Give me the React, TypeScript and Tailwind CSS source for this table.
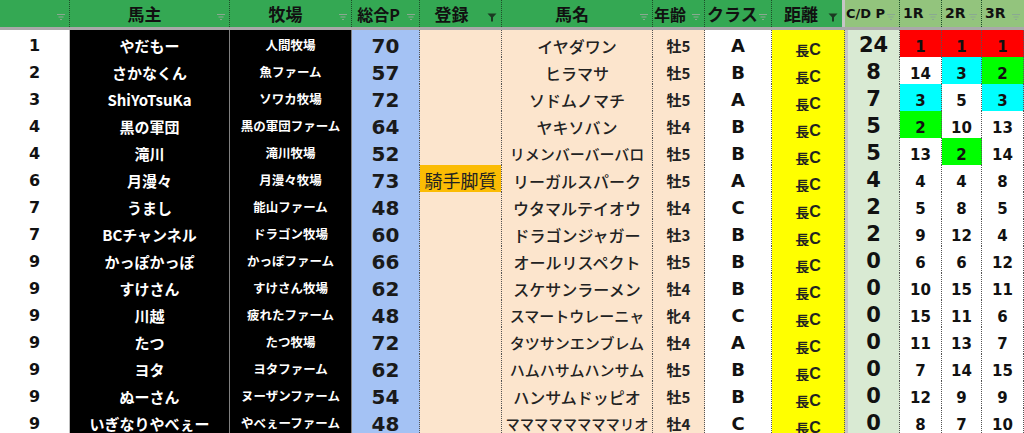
import React from "react";

type Row = [number, string, string, number, string, string, string, string, number, number, number, number];

const rows: Row[] = [
  [1, "やだもー", "人間牧場", 70, "", "イヤダワン", "牡5", "A", 24, 1, 1, 1],
  [2, "さかなくん", "魚ファーム", 57, "", "ヒラマサ", "牡5", "B", 8, 14, 3, 2],
  [3, "ShiYoTsuKa", "ソワカ牧場", 72, "", "ソドムノマチ", "牡5", "A", 7, 3, 5, 3],
  [4, "黒の軍団", "黒の軍団ファーム", 64, "", "ヤキソバン", "牡4", "B", 5, 2, 10, 13],
  [4, "滝川", "滝川牧場", 52, "", "リメンバーバーバロ", "牡5", "B", 5, 13, 2, 14],
  [6, "月漫々", "月漫々牧場", 73, "騎手脚質", "リーガルスパーク", "牡5", "A", 4, 4, 4, 8],
  [7, "うまし", "能山ファーム", 48, "", "ウタマルテイオウ", "牡4", "C", 2, 5, 8, 5],
  [7, "BCチャンネル", "ドラゴン牧場", 60, "", "ドラゴンジャガー", "牡3", "B", 2, 9, 12, 4],
  [9, "かっぽかっぽ", "かっぽファーム", 66, "", "オールリスペクト", "牡5", "B", 0, 6, 6, 12],
  [9, "すけさん", "すけさん牧場", 62, "", "スケサンラーメン", "牡4", "B", 0, 10, 15, 11],
  [9, "川越", "疲れたファーム", 48, "", "スマートウレーニャ", "牝4", "C", 0, 15, 11, 6],
  [9, "たつ", "たつ牧場", 72, "", "タツサンエンブレム", "牡4", "A", 0, 11, 13, 7],
  [9, "ヨタ", "ヨタファーム", 62, "", "ハムハサムハンサム", "牡5", "B", 0, 7, 14, 15],
  [9, "ぬーさん", "ヌーザンファーム", 54, "", "ハンサムドッピオ", "牡5", "B", 0, 12, 9, 9],
  [9, "いぎなりやべぇー", "やべぇーファーム", 48, "", "ママママママママリオ", "牡4", "C", 0, 8, 7, 10],
];

const GRID =
  "grid grid-cols-[70px_160px_122px_68px_82px_151px_52px_67px_73px_55px_42px_40px_42px]";

const JP = "font-['Noto_Sans_CJK_JP',sans-serif]";
const NUM = "font-['DejaVu_Sans','Noto_Sans_CJK_JP',sans-serif]";

function FilterIcon({ active }: { active?: boolean }) {
  if (active) {
    return (
      <svg width="10" height="9" viewBox="0 0 10 9" className="absolute right-[4px] bottom-[5px]">
        <path d="M0.5 0.5h9L6 4.2v4.3H4V4.2z" fill="#1b3a22" />
      </svg>
    );
  }
  return (
    <svg width="10" height="8" viewBox="0 0 10 8" className="absolute right-[3px] bottom-[6px]">
      <path d="M1 1.5h8M2.5 4h5M4 6.5h2" stroke="#8aa991" strokeWidth="1.2" />
    </svg>
  );
}

function H({
  children,
  light,
  active,
  last,
  extra = "",
}: {
  children?: React.ReactNode;
  light?: boolean;
  active?: boolean;
  last?: boolean;
  extra?: string;
}) {
  return (
    <div
      className={`relative h-[27px] overflow-hidden flex items-center justify-center whitespace-nowrap ${
        light ? "bg-[#93c47d]" : "bg-[#34a853]"
      } ${last ? "" : "border-r border-dotted border-r-[#1d4d2a]"} ${extra} text-[#111] font-bold ${JP}`}
    >
      {children}
      <FilterIcon active={active} />
    </div>
  );
}

function rColor(v: number) {
  if (v === 1) return "bg-[#ff0000]";
  if (v === 2) return "bg-[#00ff00]";
  if (v === 3) return "bg-[#00ffff]";
  return "bg-white";
}

const dot = "border-b border-r border-dotted border-[#555]";

export default function App() {
  return (
    <div className="w-[1024px] h-[433px] overflow-hidden bg-white">
      <div className={`${GRID} h-[30px] overflow-hidden border-b-[3px] border-b-[#a9a9a9] bg-[#34a853] text-[17px]`}>
        <H />
        <H extra="pr-[10px]">馬主</H>
        <H extra="pr-[10px]">牧場</H>
        <H extra="text-[16px] pr-[14px]">総合P</H>
        <H active extra="pr-[18px]">登録</H>
        <H extra="pr-[10px]">馬名</H>
        <H extra="text-[16px] justify-start pl-[1px]">年齢</H>
        <H extra="justify-start pl-[2px]">クラス</H>
        <H active extra="border-r-[3px] border-solid border-r-[#c6c6c6] pr-[12px]">距離</H>
        <H light extra="text-[13px] justify-start pl-[1px]">
          <span className={NUM}>C/D P</span>
        </H>
        <H light extra="text-[14px] justify-start pl-[3px]">
          <span className={NUM}>1R</span>
        </H>
        <H light extra="text-[14px] justify-start pl-[3px]">
          <span className={NUM}>2R</span>
        </H>
        <H light last extra="text-[14px] justify-start pl-[3px]">
          <span className={NUM}>3R</span>
        </H>
      </div>
      {rows.map((r, i) => {
        const [rank, owner, farm, pts, reg, horse, age, cls, cd, r1, r2, r3] = r;
        const hs = horse.length >= 10 ? "text-[14.3px]" : horse.length >= 9 ? "text-[15px]" : "text-[16px]";
        return (
          <div key={i} className={`${GRID} h-[27px]`}>
            <div
              className={`flex items-center justify-center bg-white border-b border-b-[#dadada] border-r border-r-[#bdbdbd] text-[16px] font-bold text-[#111] ${NUM}`}
            >
              {rank}
            </div>
            <div
              className={`flex items-center justify-center bg-black border-b border-r border-[#808080] text-white text-[15px] font-bold whitespace-nowrap ${JP}`}
            >
              {owner}
            </div>
            <div
              className={`flex items-center justify-center bg-black border-b border-r border-[#808080] text-white text-[12.5px] font-bold whitespace-nowrap ${JP}`}
            >
              {farm}
            </div>
            <div
              className={`flex items-center justify-center bg-[#a4c2f4] border-b border-b-[#93b1e2] border-r border-r-[#555] [border-right-style:dotted] text-[20px] font-bold text-[#1a1a1a] ${NUM}`}
            >
              {pts}
            </div>
            <div className={`flex items-stretch bg-[#fce5cd] ${dot}`}>
              {reg ? (
                <div className={`flex-1 flex items-center justify-center bg-[#fbbc04] text-[18px] text-[#222] ${JP}`}>
                  {reg}
                </div>
              ) : null}
            </div>
            <div
              className={`flex items-center justify-center bg-[#fce5cd] ${dot} ${hs} font-medium text-[#222] whitespace-nowrap ${JP}`}
            >
              {horse}
            </div>
            <div
              className={`flex items-center justify-center bg-[#fce5cd] ${dot} text-[15px] font-bold text-[#222] ${JP}`}
            >
              {age}
            </div>
            <div
              className={`flex items-center justify-center bg-white border-b border-b-[#e8e8e8] border-r border-r-[#555] [border-right-style:dotted] text-[18px] font-bold text-[#111] ${NUM}`}
            >
              {cls}
            </div>
            <div
              className={`flex items-end justify-center pb-[2px] bg-[#ffff00] ${dot} font-bold text-[#222] leading-[20px]`}
            >
              <span className={`${JP} text-[14px]`}>長</span>
              <span className="font-['Liberation_Sans',sans-serif] text-[16px]">C</span>
            </div>
            <div
              className={`flex items-center justify-center bg-[#d9ead3] border-l-[3px] border-l-[#c6c6c6] border-b border-b-[#555] [border-bottom-style:dotted] border-r border-r-[#555] [border-right-style:dotted] text-[21px] font-bold text-[#111] ${NUM}`}
            >
              {cd}
            </div>
            {[r1, r2, r3].map((v, k) => (
              <div
                key={k}
                className={`flex items-center justify-center pt-[2px] ${rColor(v)} ${dot} text-[15px] font-bold text-[#111] ${NUM}`}
              >
                {v}
              </div>
            ))}
          </div>
        );
      })}
    </div>
  );
}
